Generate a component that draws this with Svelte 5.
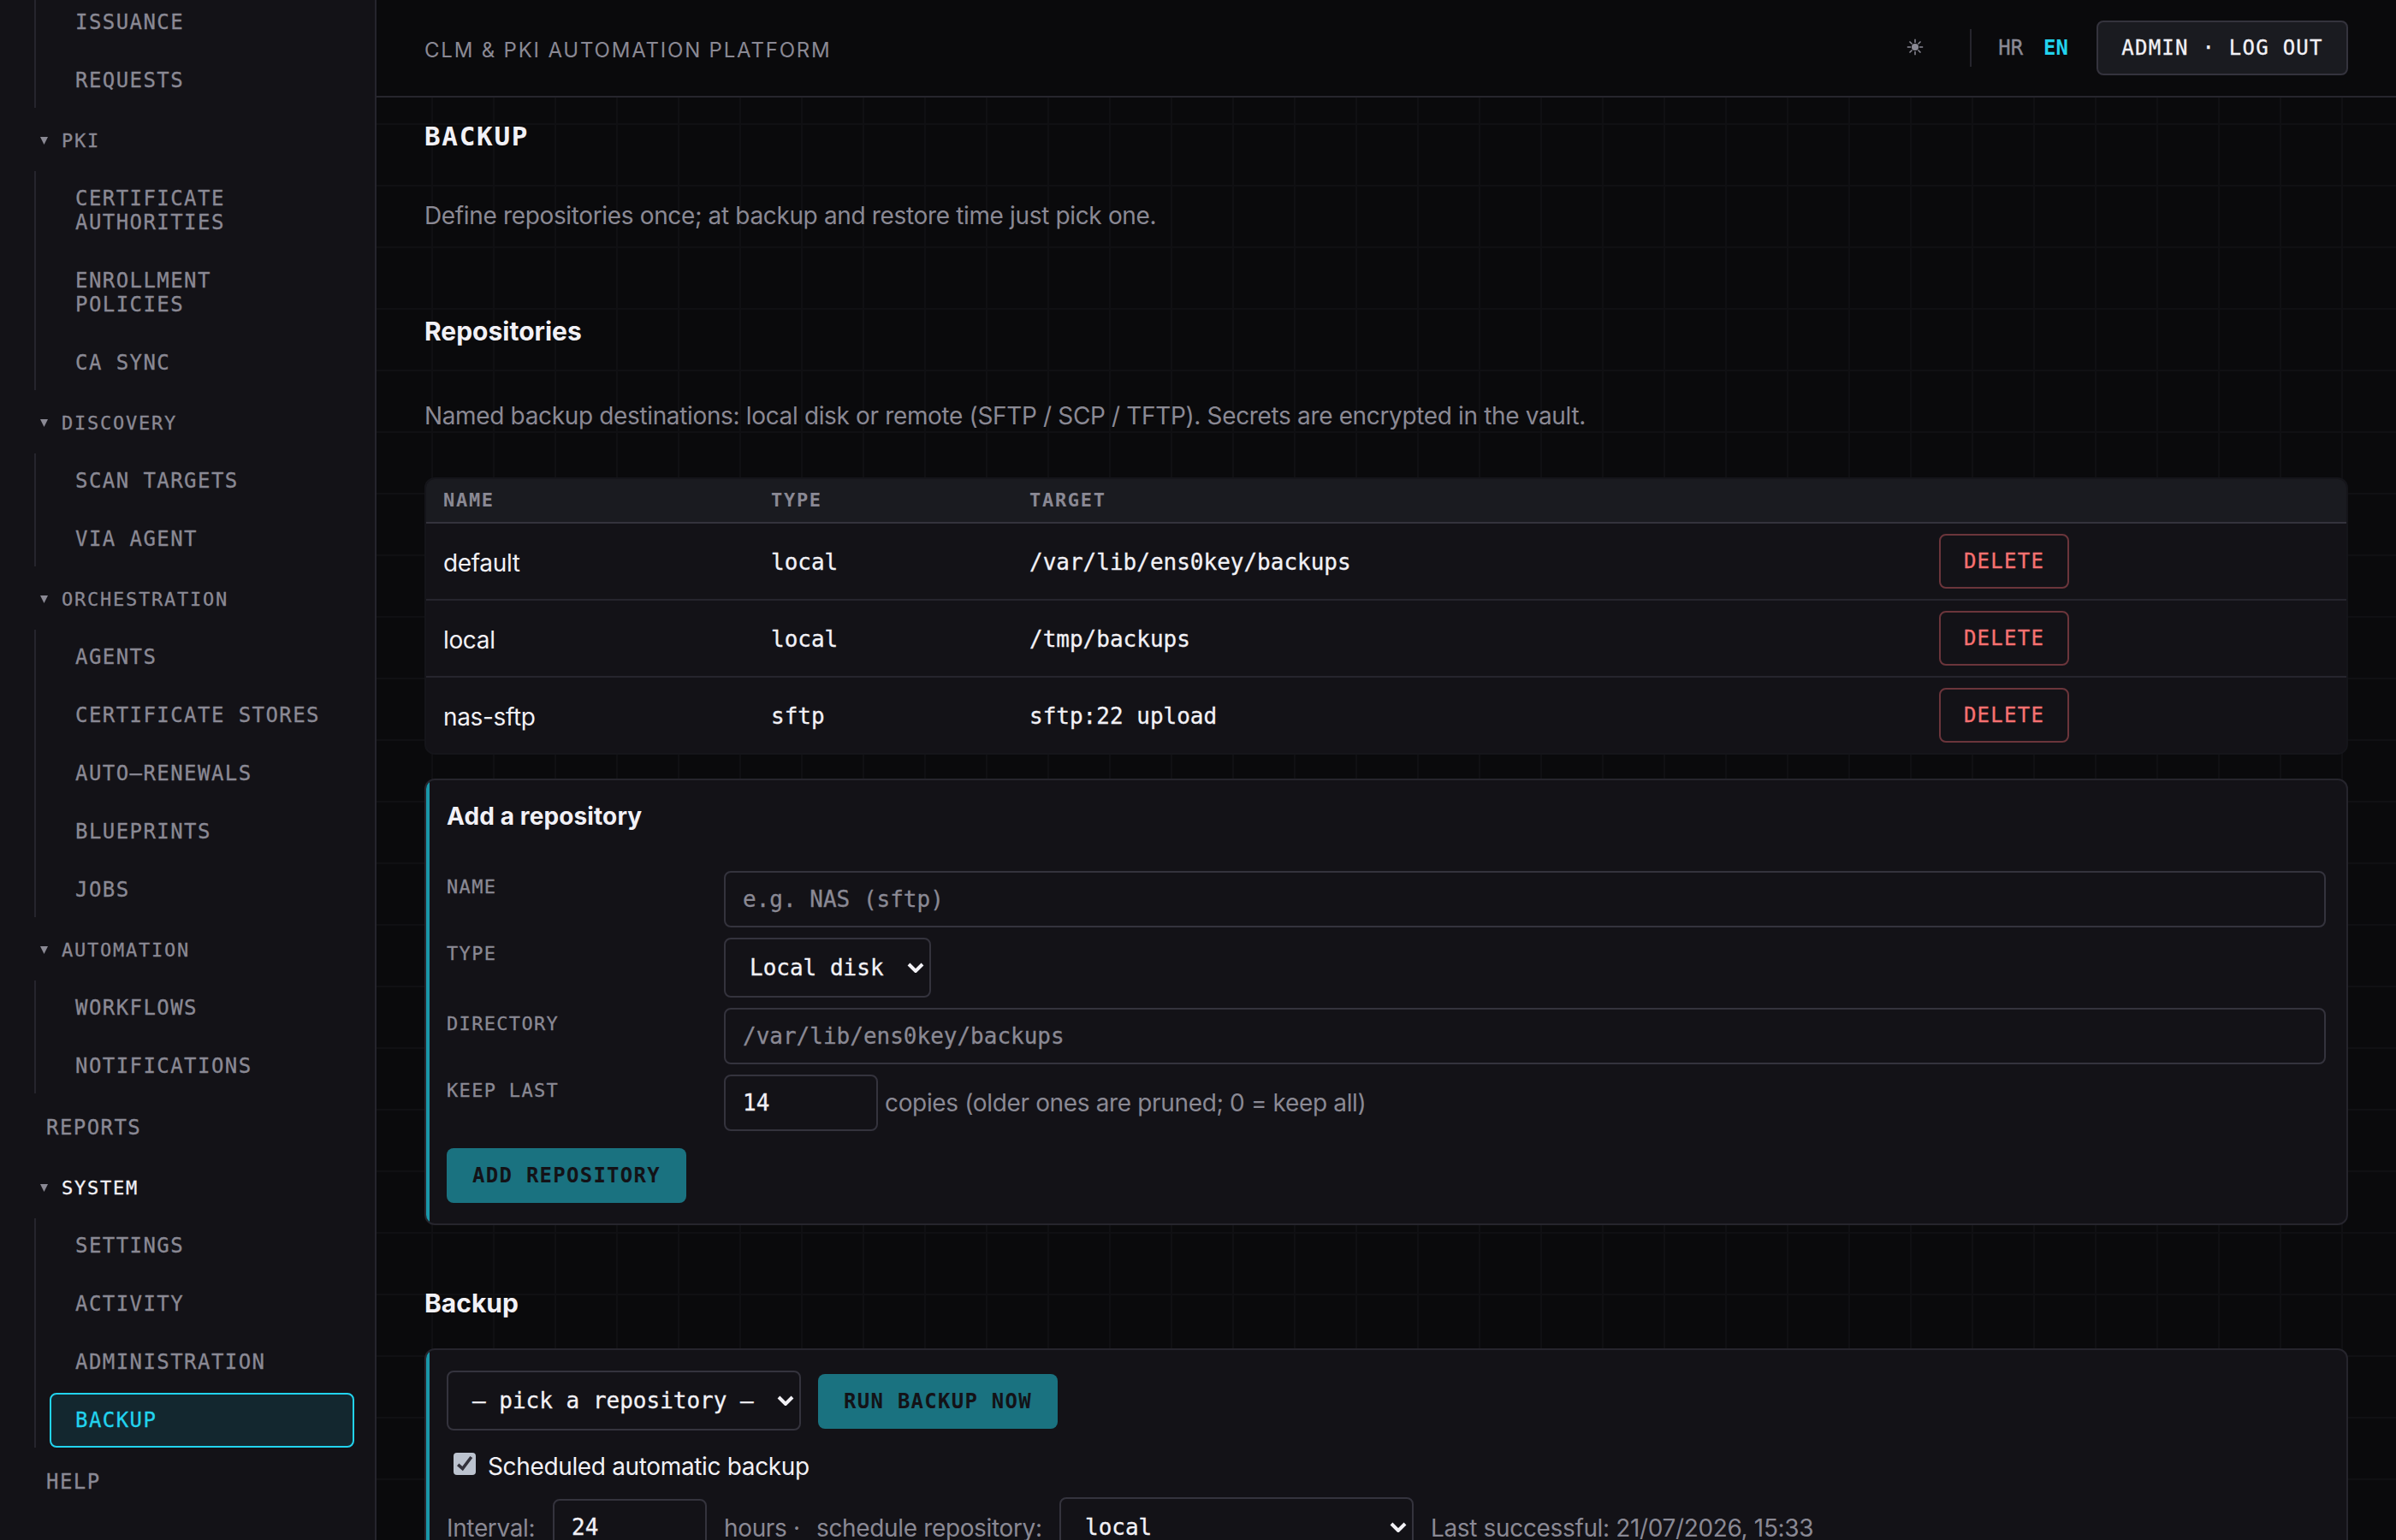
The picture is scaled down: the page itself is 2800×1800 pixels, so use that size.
<script>
  const groups = [
    { items: ['Issuance', 'Requests'] },
    { title: 'PKI', items: ['Certificate authorities', 'Enrollment policies', 'CA sync'] },
    { title: 'Discovery', items: ['Scan targets', 'Via agent'] },
    { title: 'Orchestration', items: ['Agents', 'Certificate stores', 'Auto–renewals', 'Blueprints', 'Jobs'] },
    { title: 'Automation', items: ['Workflows', 'Notifications'] },
    { link: 'Reports' },
    { title: 'System', active: true, items: ['Settings', 'Activity', 'Administration', 'Backup'] },
    { link: 'Help' },
  ];
  const repos = [
    { name: 'default', type: 'local', target: '/var/lib/ens0key/backups' },
    { name: 'local', type: 'local', target: '/tmp/backups' },
    { name: 'nas-sftp', type: 'sftp', target: 'sftp:22 upload' },
  ];
  const rays = [0, 45, 90, 135, 180, 225, 270, 315];
</script>

{#snippet chevron()}
  <svg class="chev" viewBox="0 0 20 12"><path d="M2 2 L10 10 L18 2" fill="none" stroke="currentColor" stroke-width="4" /></svg>
{/snippet}

<div class="app">
  <nav class="side">
    {#each groups as g}
      {#if g.link}
        <a class="item top">{g.link}</a>
      {:else}
        {#if g.title}
          <div class="head" class:on={g.active}>
            <svg class="tri" viewBox="0 0 9 9"><path d="M0 0H9L4.5 9Z" fill="currentColor" /></svg>
            <span>{g.title}</span>
          </div>
        {/if}
        <div class="group">
          {#each g.items as it}
            <a class="item" class:active={it === 'Backup'}>{it}</a>
          {/each}
        </div>
      {/if}
    {/each}
  </nav>

  <div class="body">
    <header>
      <div class="brand">CLM &amp; PKI automation platform</div>
      <div class="tools">
        <svg class="sun" viewBox="-10 -10 20 20">
          <circle r="4.1" fill="currentColor" />
          {#each rays as r}
            <path d="M4.9 0H9.2" transform={`rotate(${r})`} stroke="currentColor" stroke-width="1.5" />
          {/each}
        </svg>
        <div class="langs"><span>HR</span><b>EN</b></div>
        <button class="btn plain">admin · Log out</button>
      </div>
    </header>

    <main>
      <h1>Backup</h1>
      <p class="lead">Define repositories once; at backup and restore time just pick one.</p>
      <h2 class="h-repos">Repositories</h2>
      <p class="desc">Named backup destinations: local disk or remote (SFTP / SCP / TFTP). Secrets are encrypted in the vault.</p>

      <div class="table">
        <div class="row thead"><span>Name</span><span>Type</span><span>Target</span><span></span></div>
        {#each repos as r}
          <div class="row">
            <span class="name">{r.name}</span>
            <span class="mono">{r.type}</span>
            <span class="mono">{r.target}</span>
            <span><button class="btn danger">Delete</button></span>
          </div>
        {/each}
      </div>

      <section class="card add">
        <h3>Add a repository</h3>
        <div class="form">
          <label>Name</label>
          <div class="input ph">e.g. NAS (sftp)</div>
          <label>Type</label>
          <div class="select type">Local disk{@render chevron()}</div>
          <label>Directory</label>
          <div class="input ph">/var/lib/ens0key/backups</div>
          <label>Keep last</label>
          <div class="keep">
            <div class="input num">14</div>
            <span class="muted">copies (older ones are pruned; 0 = keep all)</span>
          </div>
        </div>
        <button class="btn primary">Add repository</button>
      </section>

      <h2 class="h-backup">Backup</h2>
      <section class="card run">
        <div class="line">
          <div class="select wide">— pick a repository —{@render chevron()}</div>
          <button class="btn primary">Run backup now</button>
        </div>
        <div class="check">
          <svg class="box" viewBox="0 0 26 26">
            <rect width="26" height="26" rx="4" fill="#bcc3cf" />
            <path d="M5.2 13.8 L10.6 18.6 L20.8 5" fill="none" stroke="#33323c" stroke-width="3.6" />
          </svg>
          <span>Scheduled automatic backup</span>
        </div>
        <div class="sched">
          <span class="muted interval">Interval:</span>
          <div class="input num">24</div>
          <span class="muted hours">hours ·</span>
          <span class="muted srepo">schedule repository:</span>
          <div class="select wide">local{@render chevron()}</div>
          <span class="muted last">Last successful: 21/07/2026, 15:33</span>
        </div>
      </section>
    </main>
  </div>
</div>

<style>
  :global(body) { background: #0a0a0c; overflow: hidden; }
  .app {
    --mono: 'DejaVu Sans Mono', monospace;
    --muted: #8a8994;
    --text: #f2f1f6;
    display: flex;
    width: 2800px;
    height: 1800px;
    overflow: hidden;
    box-sizing: border-box;
    color: var(--text);
    font: 28px/1.5 Inter, sans-serif;
    letter-spacing: -0.35px;
    background:
      linear-gradient(#101013 2px, transparent 2px) 0 0 / 72px 72px,
      linear-gradient(90deg, #101013 2px, transparent 2px) 0 0 / 72px 72px,
      #0a0a0c;
  }
  .app * { box-sizing: border-box; }
  h1, h2, h3, p { margin: 0; }

  .side {
    width: 440px;
    flex: none;
    height: 1800px;
    overflow: hidden;
    background: #131217;
    border-right: 2px solid #26252d;
    font-family: var(--mono);
    color: var(--muted);
    text-transform: uppercase;
    -webkit-text-stroke: 0.3px currentColor;
  }
  .group {
    margin-left: 40px;
    border-left: 2px solid #26252d;
    padding: 0 24px 0 16px;
    display: flex;
    flex-direction: column;
    gap: 4px;
  }
  .group:first-child { margin-top: -6px; }
  .item {
    display: block;
    font-size: 24px;
    line-height: 28px;
    letter-spacing: 1.44px;
    padding: 16px 28px;
    border: 2px solid transparent;
    border-radius: 8px;
  }
  .item.top { margin: 8px 24px 0 24px; }
  .item.active { color: #22d3ee; border-color: #22d3ee; background: #13272f; }
  .head {
    height: 74px;
    padding: 2px 0 0 47px;
    display: flex;
    align-items: center;
    font-size: 22px;
    letter-spacing: 1.76px;
  }
  .head.on span { color: var(--text); }
  .tri { width: 9px; height: 9px; margin-right: 16px; }

  .body { flex: 1; min-width: 0; }
  header {
    height: 114px;
    border-bottom: 2px solid #26252d;
    background: #0a0a0c;
    display: flex;
    justify-content: space-between;
    align-items: center;
    padding: 0 56px;
  }
  .brand { font-size: 24px; letter-spacing: 1.8px; color: var(--muted); text-transform: uppercase; padding-top: 5px; }
  .tools { display: flex; align-items: center; font-family: var(--mono); letter-spacing: 0; }
  .sun { width: 20px; height: 20px; color: var(--muted); margin: 0 54px 2px 0; }
  .langs {
    height: 44px;
    border-left: 2px solid #26252d;
    padding-left: 31px;
    margin-right: 33px;
    display: flex;
    gap: 24px;
    align-items: center;
    font-size: 24px;
    line-height: 44px;
    color: var(--muted);
  }
  .langs span { -webkit-text-stroke: 0.3px currentColor; }
  .langs b { color: #22d3ee; }

  .btn {
    height: 64px;
    padding: 0 26px;
    border: 2px solid transparent;
    border-radius: 8px;
    font: 24px/28px var(--mono);
    letter-spacing: 1.25px;
    text-transform: uppercase;
    white-space: nowrap;
    -webkit-text-stroke: 0.3px currentColor;
  }
  .plain { width: 294px; background: #1a1b20; border-color: #34333d; color: var(--text); }
  .danger { width: 152px; background: transparent; border-color: #6b353b; color: #f87171; }
  .primary { width: 280px; background: #1a7280; color: #131217; font-weight: 700; -webkit-text-stroke: 0; }

  main { padding: 0 56px; }
  h1 { font: 700 31px/44px var(--mono); letter-spacing: 1.7px; text-transform: uppercase; padding-top: 23px; }
  .lead { color: var(--muted); line-height: 44px; margin-top: 49px; }
  h2 { font-size: 30px; line-height: 44px; font-weight: 700; letter-spacing: 0; }
  .h-repos { margin-top: 91px; }
  .desc { color: var(--muted); line-height: 44px; margin-top: 55px; }

  .table {
    margin-top: 50px;
    height: 324px;
    border: 2px solid #15151a;
    border-radius: 12px;
    background: #131217;
    overflow: hidden;
  }
  .row {
    display: grid;
    grid-template-columns: 383px 302px 1063px 1fr;
    align-items: center;
    height: 90px;
    padding-left: 20px;
    border-bottom: 2px solid #26252d;
  }
  .row:last-child { border-color: transparent; }
  .thead {
    height: 52px;
    background: #1a1b20;
    border-color: #34333d;
    font: 700 22px/26px var(--mono);
    letter-spacing: 1.7px;
    text-transform: uppercase;
    color: var(--muted);
  }
  .row .btn { display: block; }
  .name { padding-top: 4px; }
  .mono { font: 26px/30px var(--mono); letter-spacing: 0; padding-top: 2px; -webkit-text-stroke: 0.3px currentColor; }

  .card {
    position: relative;
    background: #131217;
    border: 2px solid #26252d;
    border-radius: 12px;
    padding: 24px;
    overflow: hidden;
  }
  .card::before { content: ''; position: absolute; left: 0; top: 0; bottom: 0; width: 4px; background: #1a97a9; }
  .add { margin-top: 28px; height: 522px; padding-top: 20px; }
  h3 { font-size: 28px; line-height: 44px; font-weight: 700; letter-spacing: 0.12px; }
  .form {
    display: grid;
    grid-template-columns: 324px 1fr;
    row-gap: 12px;
    margin: 42px 0 20px;
  }
  label {
    font: 22px/26px var(--mono);
    letter-spacing: 1.32px;
    text-transform: uppercase;
    color: var(--muted);
    padding-top: 6px;
    -webkit-text-stroke: 0.3px currentColor;
  }
  .input, .select {
    border: 2px solid #34333d;
    border-radius: 8px;
    font: 26px/30px var(--mono);
    letter-spacing: 0;
    color: var(--text);
    white-space: nowrap;
    -webkit-text-stroke: 0.3px currentColor;
  }
  .input { height: 66px; padding: 16px 20px; }
  .input.ph { color: var(--muted); }
  .num { width: 180px; flex: none; }
  .select { height: 70px; padding: 0 6px 0 28px; display: flex; align-items: center; justify-content: space-between; flex: none; }
  .type { width: 242px; }
  .wide { width: 414px; }
  .chev { width: 20px; height: 12px; }
  .keep { display: flex; align-items: center; gap: 8px; }
  .muted { color: var(--muted); white-space: nowrap; }

  .h-backup { margin-top: 69px; }
  .run { margin-top: 31px; height: 400px; }
  .line { display: flex; align-items: center; gap: 20px; }
  .line .btn { margin-top: 2px; }
  .check { display: flex; align-items: center; height: 44px; margin: 20px 0 14px 8px; gap: 14px; }
  .box { width: 26px; height: 26px; margin-top: -6px; }
  .sched { display: flex; align-items: center; }
  .sched .muted { padding-top: 2px; }
  .interval { width: 124px; }
  .hours { margin-left: 20px; width: 108px; }
  .srepo { width: 284px; }
  .last { margin-left: 20px; }
</style>
